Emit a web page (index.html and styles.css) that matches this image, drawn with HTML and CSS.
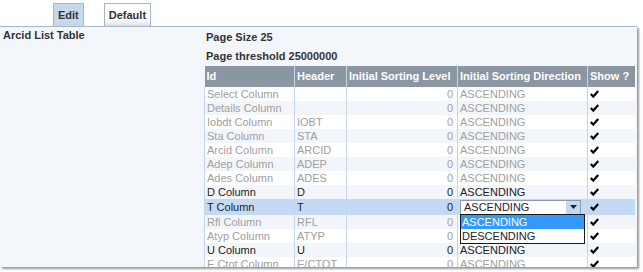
FILE: index.html
```html
<!DOCTYPE html>
<html>
<head>
<meta charset="utf-8">
<link rel="stylesheet" href="styles.css">
</head>
<body>
<div class="tabs">
  <div class="tab tab-active">Edit</div>
  <div class="tab tab-default">Default</div>
</div>
<div class="panel">
  <div class="label">Arcid List Table</div>
  <div class="content">
    <div class="info">Page Size 25</div>
    <div class="info">Page threshold 25000000</div>
    <table class="grid">
      <colgroup>
        <col class="c-id"><col class="c-hd"><col class="c-lv"><col class="c-dir"><col class="c-show">
      </colgroup>
      <thead>
        <tr><th>Id</th><th>Header</th><th>Initial Sorting Level</th><th>Initial Sorting Direction</th><th>Show ?</th></tr>
      </thead>
      <tbody>
        <tr class="dis"><td>Select Column</td><td></td><td class="num">0</td><td>ASCENDING</td><td class="chk"><svg viewBox="0 0 9 8" width="9" height="8"><path d="M0.8 4 L3.3 6.6 L8.3 1" fill="none" stroke="#000" stroke-width="2.2"/></svg></td></tr>
        <tr class="dis alt"><td>Details Column</td><td></td><td class="num">0</td><td>ASCENDING</td><td class="chk"><svg viewBox="0 0 9 8" width="9" height="8"><path d="M0.8 4 L3.3 6.6 L8.3 1" fill="none" stroke="#000" stroke-width="2.2"/></svg></td></tr>
        <tr class="dis"><td>Iobdt Column</td><td>IOBT</td><td class="num">0</td><td>ASCENDING</td><td class="chk"><svg viewBox="0 0 9 8" width="9" height="8"><path d="M0.8 4 L3.3 6.6 L8.3 1" fill="none" stroke="#000" stroke-width="2.2"/></svg></td></tr>
        <tr class="dis alt"><td>Sta Column</td><td>STA</td><td class="num">0</td><td>ASCENDING</td><td class="chk"><svg viewBox="0 0 9 8" width="9" height="8"><path d="M0.8 4 L3.3 6.6 L8.3 1" fill="none" stroke="#000" stroke-width="2.2"/></svg></td></tr>
        <tr class="dis"><td>Arcid Column</td><td>ARCID</td><td class="num">0</td><td>ASCENDING</td><td class="chk"><svg viewBox="0 0 9 8" width="9" height="8"><path d="M0.8 4 L3.3 6.6 L8.3 1" fill="none" stroke="#000" stroke-width="2.2"/></svg></td></tr>
        <tr class="dis alt"><td>Adep Column</td><td>ADEP</td><td class="num">0</td><td>ASCENDING</td><td class="chk"><svg viewBox="0 0 9 8" width="9" height="8"><path d="M0.8 4 L3.3 6.6 L8.3 1" fill="none" stroke="#000" stroke-width="2.2"/></svg></td></tr>
        <tr class="dis"><td>Ades Column</td><td>ADES</td><td class="num">0</td><td>ASCENDING</td><td class="chk"><svg viewBox="0 0 9 8" width="9" height="8"><path d="M0.8 4 L3.3 6.6 L8.3 1" fill="none" stroke="#000" stroke-width="2.2"/></svg></td></tr>
        <tr class="alt"><td>D Column</td><td>D</td><td class="num">0</td><td>ASCENDING</td><td class="chk"><svg viewBox="0 0 9 8" width="9" height="8"><path d="M0.8 4 L3.3 6.6 L8.3 1" fill="none" stroke="#000" stroke-width="2.2"/></svg></td></tr>
        <tr class="sel"><td>T Column</td><td>T</td><td class="num">0</td><td class="dir-edit">
          <div class="combo"><span class="combo-text">ASCENDING</span><span class="combo-btn"><svg viewBox="0 0 7 4" width="7" height="4"><path d="M0 0 H7 L3.5 4 Z" fill="#222"/></svg></span></div>
          <div class="dropdown"><div class="opt opt-on">ASCENDING</div><div class="opt">DESCENDING</div></div>
        </td><td class="chk"><svg viewBox="0 0 9 8" width="9" height="8"><path d="M0.8 4 L3.3 6.6 L8.3 1" fill="none" stroke="#000" stroke-width="2.2"/></svg></td></tr>
        <tr class="dis alt"><td>Rfl Column</td><td>RFL</td><td class="num">0</td><td></td><td class="chk"><svg viewBox="0 0 9 8" width="9" height="8"><path d="M0.8 4 L3.3 6.6 L8.3 1" fill="none" stroke="#000" stroke-width="2.2"/></svg></td></tr>
        <tr class="dis"><td>Atyp Column</td><td>ATYP</td><td class="num">0</td><td></td><td class="chk"><svg viewBox="0 0 9 8" width="9" height="8"><path d="M0.8 4 L3.3 6.6 L8.3 1" fill="none" stroke="#000" stroke-width="2.2"/></svg></td></tr>
        <tr class="alt"><td>U Column</td><td>U</td><td class="num">0</td><td>ASCENDING</td><td class="chk"><svg viewBox="0 0 9 8" width="9" height="8"><path d="M0.8 4 L3.3 6.6 L8.3 1" fill="none" stroke="#000" stroke-width="2.2"/></svg></td></tr>
        <tr class="dis"><td>E Ctot Column</td><td>E/CTOT</td><td class="num">0</td><td>ASCENDING</td><td class="chk"><svg viewBox="0 0 9 8" width="9" height="8"><path d="M0.8 4 L3.3 6.6 L8.3 1" fill="none" stroke="#000" stroke-width="2.2"/></svg></td></tr>
      </tbody>
    </table>
  </div>
</div>
</body>
</html>
```
FILE: styles.css
```css
html, body { margin: 0; padding: 0; background: #fff; }
body {
  font-family: "Liberation Sans", Arial, sans-serif;
  font-size: 11px;
  color: #222;
  width: 643px;
  height: 272px;
  overflow: hidden;
}
.tabs {
  display: flex;
  height: 23px;
  padding-top: 3px;
  padding-left: 53px;
  gap: 20px;
}
.tab {
  box-sizing: border-box;
  height: 23px;
  border: 1px solid #a6b7c8;
  border-bottom: none;
  font-weight: bold;
  font-size: 11px;
  color: #333;
  line-height: 22px;
  padding: 0 4px;
}
.tab-active { background: #c6d9ec; }
.tab-default {
  background: linear-gradient(#fff 0, #fff 72%, #d8dee6 100%);
}
.panel {
  width: 637px;
  height: 241px;
  box-sizing: border-box;
  border-top: 1px solid #a8b6c6;
  background: #f3f7fc;
  box-shadow: 2px 2px 2px #9a9a9a;
  display: flex;
  overflow: hidden;
}
.label {
  width: 204px;
  font-weight: bold;
  padding: 2px 0 0 3px;
  box-sizing: border-box;
  color: #333;
}
.content { flex: 1; padding-top: 1px; }
.info {
  font-weight: bold;
  color: #333;
  height: 19px;
  line-height: 19px;
  padding-left: 2px;
}
.grid {
  border-collapse: collapse;
  table-layout: fixed;
  width: 430px;
}
.c-id { width: 90px; }
.c-hd { width: 52px; }
.c-lv { width: 111px; }
.c-dir { width: 130px; }
.c-show { width: 47px; }
.grid th {
  background: #8a96a2;
  color: #fff;
  font-weight: bold;
  text-align: left;
  height: 21px;
  padding: 0 2px;
  white-space: nowrap;
  overflow: hidden;
  border-left: 1px solid #c3d6ea;
  line-height: 21px;
}
.grid th:first-child { border-left: none; }
.grid td {
  height: 14px;
  padding: 0 2px;
  line-height: 14px;
  white-space: nowrap;
  border-left: 1px solid #c3d6ea;
  background: #fff;
  color: #222;
}
.grid tr.alt td { background: #f2f6fb; }
.grid tr.dis td { color: #a0a0a0; }
.grid tr.sel td { background: #c4daf4; height: 16px; }
.grid td.num { text-align: right; padding-right: 4px; }
.grid td.chk { padding-left: 2px; }
.grid td.chk svg { display: block; }
.dir-edit { position: relative; }
.combo {
  display: flex;
  height: 15px;
  background: #fff;
  border: 1px solid #8a9ab0;
  box-sizing: border-box;
  margin-right: 4px;
}
.combo-text { flex: 1; padding-left: 3px; line-height: 13px; color: #222; }
.combo-btn {
  width: 14px;
  background: #c4daf4;
  display: flex;
  align-items: center;
  justify-content: center;
}
.dropdown {
  position: absolute;
  left: 2px;
  top: 15px;
  width: 123px;
  border: 1px solid #1a1a1a;
  background: #fff;
  z-index: 2;
}
.opt { height: 14px; line-height: 14px; padding-left: 1px; color: #222; }
.opt-on { background: #3399ff; color: #fff; }
```
